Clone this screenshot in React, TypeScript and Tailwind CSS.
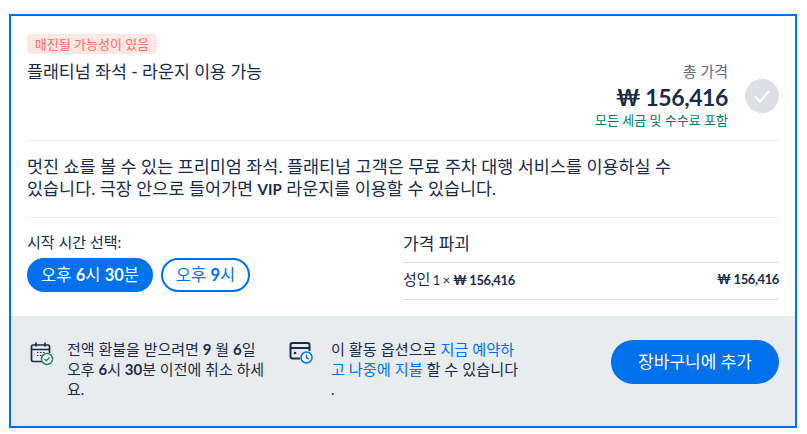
import React from 'react';

function CalendarIcon() {
  return (
    <svg width="25" height="25" viewBox="0 0 25 25" fill="none">
      <path d="M13 20.500H4c-1 0-1.500-.5-1.500-1.500V5.500c0-1 .5-1.500 1.500-1.500h15c1 0 1.500.5 1.500 1.500V12" stroke="#1a2b49" strokeWidth="1.700" />
      <path d="M2.500 8.500h18M7 1.500v4M16 1.500v4" stroke="#1a2b49" strokeWidth="1.700" />
      <path d="M8 11.500h1.500M11 11.500h1.500M14 11.500h1.500M8 14.500h1.500M11 14.500h1.500" stroke="#1a2b49" strokeWidth="1.200" />
      <circle cx="18" cy="18" r="5.500" fill="#fff" stroke="#1f8a5f" strokeWidth="1.500" />
      <path d="M15.500 18l1.800 1.800 3.200-3.300" stroke="#1f8a5f" strokeWidth="1.500" />
    </svg>
  );
}

function PayLaterIcon() {
  return (
    <svg width="25" height="25" viewBox="0 0 25 25" fill="none">
      <path d="M11 17.500H3.500C2.500 17.500 1.500 16.800 1.500 15.500V4C1.500 2.800 2.500 2 3.500 2h15c1.200 0 2 .8 2 2v6" stroke="#1a2b49" strokeWidth="2" />
      <path d="M1.500 7h19" stroke="#1a2b49" strokeWidth="2" />
      <circle cx="6" cy="12" r="1.300" fill="#1a2b49" />
      <circle cx="17.500" cy="16.500" r="5.500" fill="#fff" stroke="#0071eb" strokeWidth="1.500" />
      <path d="M17.500 13.500v3.300l2.200 1.200" stroke="#0071eb" strokeWidth="1.500" />
    </svg>
  );
}

export default function App() {
  return (
    <div className="h-[434px] w-[807px] overflow-hidden bg-white pt-[14px] pl-[9px] font-[Lato,'Noto_Sans_CJK_KR',sans-serif] text-[#1a2b49]">
      <div className="flex h-[414px] w-[788px] flex-col border-2 border-[#0071eb]">
        <div className="flex-1 px-4 pt-[18px]">
          {/* header */}
          <div className="flex h-[107px] border-b border-[#ebedf0]">
            <div className="flex-1">
              <span className="block h-5 w-[130px] rounded bg-[#ffe8e3] text-center text-[13px] leading-5 text-[#ff6a63]">
                매진될 가능성이 있음
              </span>
              <div className="mt-[6px] text-[17.300px] leading-[24px]">플래티넘 좌석 - 라운지 이용 가능</div>
            </div>
            <div className="mt-[27px] text-right">
              <div className="text-[15px] leading-[20px] text-[#63687a]">총 가격</div>
              <div className="mt-[2px] text-[23px] leading-[28px] font-bold tracking-[-0.4px]">₩ 156,416</div>
              <div className="text-[13px] leading-[18px] text-[#007a6c]">모든 세금 및 수수료 포함</div>
            </div>
            <div className="mt-[45px] ml-[17px] flex h-[34px] w-[34px] items-center justify-center rounded-full bg-[#dcdfe4]">
              <svg width="18" height="18" viewBox="0 0 18 18" fill="none">
                <path d="M2 9.500l5 5L16 4" stroke="#fff" strokeWidth="2" />
              </svg>
            </div>
          </div>

          <p className="w-[650px] pt-[15px] text-[17.450px] leading-[22px]">
            멋진 쇼를 볼 수 있는 프리미엄 좌석. 플래티넘 고객은 무료 주차 대행 서비스를 이용하실 수 있습니다. 극장 안으로 들어가면 <b className="text-[15px]">VIP</b> 라운지를 이용할 수 있습니다.
          </p>

          <div className="mt-[17px] flex border-t border-[#ebedf0] pt-[14px]">
            <div className="w-[376px]">
              <div className="text-[15px] leading-[20px]">시작 시간 선택:</div>
              <div className="mt-[6px] flex gap-2">
                <button className="h-[34px] w-[126px] rounded-full bg-[#0071eb] text-[16.500px] text-white">
                  오후 <b>6</b>시 <b>30</b>분
                </button>
                <button className="h-[34px] w-[89px] rounded-full border-2 border-[#0071eb] text-[16.500px] text-[#0071eb]">
                  오후 <b>9</b>시
                </button>
              </div>
            </div>
            <div className="flex-1">
              <div className="h-[31px] border-b border-[#dcdfe4] text-[17px] leading-[24px]">가격 파괴</div>
              <div className="flex h-[37px] items-center justify-between border-b border-[#dcdfe4] pb-[3px] text-[13px] tracking-[-0.4px]">
                <span><span className="text-[15px]">성인</span> 1 × <b>₩ 156,416</b></span>
                <b>₩ 156,416</b>
              </div>
            </div>
          </div>
        </div>

        {/* footer */}
        <div className="flex h-[110px] bg-[#e9ecef] px-4 pt-[23px] text-[15px] leading-[20px]">
          <div className="mt-[2px] ml-[2px] shrink-0"><CalendarIcon /></div>
          <p className="ml-[13px] h-[60px] w-[200px]">
            전액 환불을 받으려면 <b>9</b> 월 <b>6</b>일 오후 <b>6</b>시 <b>30</b>분 이전에 취소 하세요.
          </p>
          <div className="mt-[2px] ml-[22px] shrink-0"><PayLaterIcon /></div>
          <p className="ml-[17px] w-[190px] text-[15.200px]">
            이 활동 옵션으로 <span className="text-[#0071eb]">지금 예약하고 나중에 지불</span> 할 수 있습니다 .
          </p>
          <button className="mt-px ml-auto h-[44px] w-[168px] rounded-full bg-[#0071eb] text-[17px] text-white">
            장바구니에 추가
          </button>
        </div>
      </div>
    </div>
  );
}
